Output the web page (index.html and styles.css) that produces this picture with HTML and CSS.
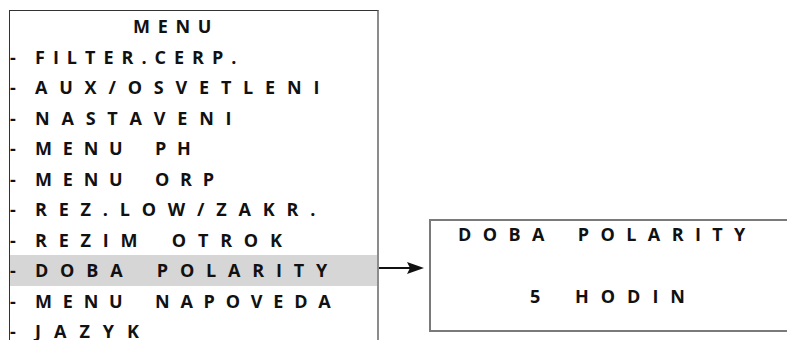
FILE: index.html
```html
<!DOCTYPE html>
<html lang="cs">
<head>
    <meta charset="UTF-8">
    <meta name="viewport" content="width=device-width, initial-scale=1.0">
    <title>Menu - doba polarity</title>
    <link rel="stylesheet" href="styles.css">
</head>
<body>
    <div class="screen">
        <div class="menu">
            <div class="menu-title">MENU</div>
            <div class="menu-item tight"><span class="dash">-</span>FILTER.CERP.</div>
            <div class="menu-item"><span class="dash">-</span>AUX/OSVETLENI</div>
            <div class="menu-item"><span class="dash">-</span>NASTAVENI</div>
            <div class="menu-item snug"><span class="dash">-</span>MENU PH</div>
            <div class="menu-item snug"><span class="dash">-</span>MENU ORP</div>
            <div class="menu-item"><span class="dash">-</span>REZ.LOW/ZAKR.</div>
            <div class="menu-item"><span class="dash">-</span>REZIM OTROK</div>
            <div class="menu-item active"><span class="dash">-</span>DOBA POLARITY</div>
            <div class="menu-item snug"><span class="dash">-</span>MENU NAPOVEDA</div>
            <div class="menu-item loose"><span class="dash">-</span>JAZYK</div>
        </div>

        <div class="detail-wrap">
            <svg class="arrow" width="49" height="14" viewBox="0 0 49 14">
                <line x1="0" y1="7" x2="32" y2="7" stroke="#111" stroke-width="2"/>
                <polygon points="28,1 45,7 28,13 31,7" fill="#111"/>
            </svg>
            <div class="detail">
                <div class="detail-title">DOBA POLARITY</div>
                <div class="detail-value">5 HODIN</div>
            </div>
        </div>
    </div>
</body>
</html>
```

FILE: styles.css
```css
body {
    margin: 0;
    background: #fff;
    font-family: "Open Sans", Lato, sans-serif;
    font-weight: 700;
    font-size: 18px;
    color: #111;
}
.screen {
    display: flex;
    align-items: flex-start;
    padding: 10px 0 0 9px;
    height: 340px;
    box-sizing: border-box;
    overflow: hidden;
}
.menu {
    flex-shrink: 0;
    width: 367px;
    height: 340px;
    border-top: 1px solid #333;
    border-left: 1px solid #333;
    border-right: 2px solid #8c8c8c;
    letter-spacing: 11.8px;
    word-spacing: 6px;
}
.menu-title {
    height: 30.5px;
    line-height: 30.5px;
    padding-left: 123px;
    letter-spacing: 7.7px;
}
.menu-item {
    display: flex;
    height: 30.5px;
    line-height: 30.5px;
    white-space: pre;
}
.menu-item.tight {
    letter-spacing: 8px;
}
.menu-item.snug {
    letter-spacing: 10.8px;
}
.menu-item.loose {
    letter-spacing: 13px;
}
.menu-item.active {
    background: #d6d6d6;
}
.dash {
    width: 25px;
    letter-spacing: 0;
}
.detail-wrap {
    display: flex;
    align-items: flex-start;
    margin-top: 209px;
}
.arrow {
    flex-shrink: 0;
    margin-top: 42px;
    margin-right: 1px;
}
.detail {
    flex-shrink: 0;
    width: 400px;
    height: 109px;
    border: 2px solid #7a7a7a;
    border-right: none;
    letter-spacing: 11.4px;
    word-spacing: 6px;
}
.detail-title {
    line-height: 26px;
    padding-left: 27px;
    white-space: pre;
}
.detail-value {
    margin-top: 36px;
    line-height: 26px;
    padding-left: 99px;
    letter-spacing: 12px;
    white-space: pre;
}
```
